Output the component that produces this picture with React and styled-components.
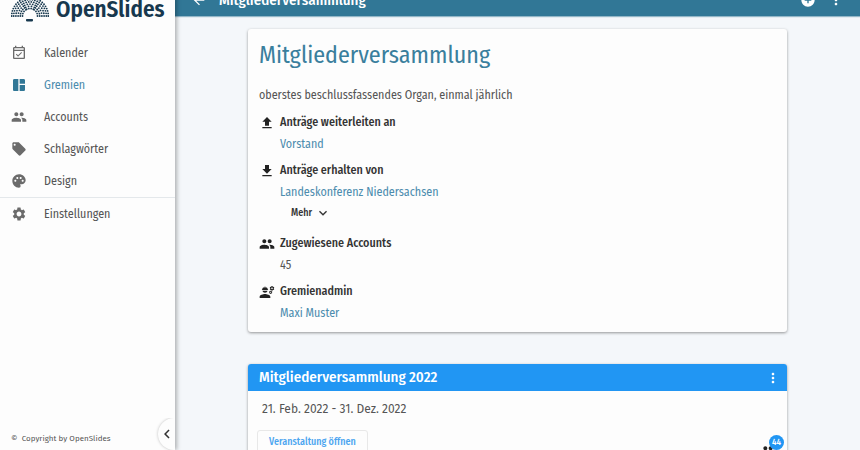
import styled, { createGlobalStyle } from "styled-components";
import {
	MdAddCircle,
	MdArrowBack,
	MdChevronLeft,
	MdDownload,
	MdEngineering,
	MdExpandMore,
	MdGroup,
	MdLocalOffer,
	MdMoreVert,
	MdOutlineEventAvailable,
	MdPalette,
	MdSettings,
	MdUpload,
} from "react-icons/md";

const GlobalStyle = createGlobalStyle`
	* {
		box-sizing: border-box;
	}

	body {
		margin: 0;
		overflow: hidden;
		background: #f4f7fa;
		color: #555;
		font-family: "Fira Sans Condensed", Roboto, sans-serif;
		font-size: 12px;
		line-height: 21px;
	}

	button {
		padding: 0;
		border: 0;
		background: none;
		color: inherit;
		font: inherit;
		cursor: pointer;
	}

	svg {
		display: block;
		flex: none;
	}
`;

/* the top of the page is scrolled out by half a toolbar */
const Shell = styled.div`
	display: grid;
	grid-template-rows: minmax(0, 1fr);
	grid-template-columns: 175px minmax(0, 1fr);
	height: calc(100vh + 16px);
	margin-top: -16px;
`;

const Sidebar = styled.aside`
	position: relative;
	z-index: 1;
	display: flex;
	flex-direction: column;
	background: #fdfdfd;
	box-shadow: 2px 0 4px rgba(0, 0, 0, 0.28);
`;

const Brand = styled.a`
	display: flex;
	align-items: center;
	gap: 7px;
	height: 50px;
	padding-left: 11px;
	color: #17384e;
	font-size: 23px;
	font-weight: 600;
	text-decoration: none;
`;

const Nav = styled.nav`
	display: flex;
	flex-direction: column;
	padding-top: 3px;
`;

const NavLink = styled.a`
	display: flex;
	align-items: center;
	gap: 17px;
	height: 32px;
	padding-left: 11px;
	color: ${({ $active }) => ($active ? "#4c8cae" : "#555")};
	text-decoration: none;

	svg {
		color: ${({ $active }) => ($active ? "#317796" : "#6b6b6b")};
	}
`;

const Divider = styled.hr`
	width: 100%;
	height: 1px;
	margin: 0;
	border: 0;
	background: #e4e8eb;
`;

const SidebarFooter = styled.div`
	display: flex;
	align-items: flex-end;
	justify-content: space-between;
	margin-top: auto;
	padding-left: 11px;
	overflow: hidden;
`;

const Copyright = styled.small`
	padding-bottom: 1px;
	font-family: "Fira Sans", Roboto, sans-serif;
	font-size: 8px;
`;

const CollapseButton = styled.button`
	display: flex;
	align-items: center;
	width: 17px;
	height: 32px;
	border-radius: 16px 0 0 16px;
	background: #fdfdfd;
	box-shadow: 0 0 3px rgba(0, 0, 0, 0.25);
	color: #333;
`;

const Page = styled.div`
	display: flex;
	flex-direction: column;
	min-width: 0;
`;

const Toolbar = styled.header`
	display: flex;
	flex: none;
	align-items: center;
	gap: 12px;
	height: 32px;
	padding: 0 16px;
	background: #317796;
	color: #fff;
	box-shadow: 0 1px 1px rgba(49, 119, 150, 0.5);
`;

const ToolbarTitle = styled.span`
	flex: 1;
	font-size: 15px;
	font-weight: 500;
`;

const Content = styled.main`
	display: flex;
	flex-direction: column;
	gap: 32px;
	padding: 13px 73px 0;
`;

const Card = styled.section`
	border-radius: 3px;
	background: #fdfdfd;
	box-shadow: 0 1px 3px rgba(0, 0, 0, 0.4);
`;

const CommitteeCard = styled(Card)`
	padding: 8px 11px 3px;
`;

const Title = styled.h1`
	margin: 0;
	color: #3a7f9d;
	font-size: 24px;
	font-weight: 400;
	line-height: 36px;
`;

const Description = styled.p`
	margin: 12px 0 6px;
`;

const Group = styled.div`
	margin-bottom: 5px;
`;

const GroupTitle = styled.h2`
	display: flex;
	align-items: center;
	gap: 5px;
	margin: 0;
	color: #333;
	font-size: 12px;
	font-weight: 500;

	svg {
		color: #222;
	}
`;

const GroupValue = styled.div`
	padding-left: 21px;
	line-height: 22px;
`;

const TextLink = styled.a`
	color: #4c8cae;
	text-decoration: none;
`;

const MoreButton = styled.button`
	display: flex;
	align-items: center;
	gap: 3px;
	height: 20px;
	margin: 0 0 10px 32px;
	color: #333;
	font-size: 10px;
	font-weight: 500;
`;

const MeetingHeader = styled.header`
	display: flex;
	align-items: center;
	justify-content: space-between;
	height: 27px;
	padding: 0 6px 0 11px;
	border-radius: 3px 3px 0 0;
	background: #2196f3;
	color: #fff;
`;

const MeetingTitle = styled.h2`
	margin: 0;
	font-size: 15px;
	font-weight: 500;
`;

const MeetingDate = styled.p`
	margin: 0;
	padding: 8px 14px 0;
	font-family: "Fira Sans", Roboto, sans-serif;
`;

const MeetingActions = styled.div`
	display: flex;
	align-items: flex-start;
	justify-content: space-between;
	padding: 10px 5px 10px 9px;
`;

const OpenButton = styled.button`
	height: 24px;
	padding: 0 11px;
	border: 1px solid #e8e8e8;
	border-radius: 3px;
	color: #4ba5f0;
	font-size: 10px;
	font-weight: 500;
`;

const Participants = styled.div`
	position: relative;
	padding: 13px 6px 0 0;
	color: #222;
`;

const Badge = styled.span`
	position: absolute;
	top: 5px;
	right: -2px;
	width: 15px;
	height: 15px;
	border-radius: 50%;
	background: #2196f3;
	color: #fff;
	font-size: 9px;
	font-weight: 500;
	line-height: 15px;
	text-align: center;
`;

/* seats of the plenum: three blocks with an aisle between them */
const blocks = [
	[0, 56],
	[64, 116],
	[124, 180],
];
const radii = [7.5, 9.7, 11.9, 14.1, 16.3, 18.3];

const seats = radii.flatMap((radius) =>
	blocks.flatMap(([from, to]) => {
		const steps = Math.round(((to - from) * Math.PI * radius) / 180 / 2.6);
		return Array.from({ length: steps + 1 }, (_, i) => {
			const angle = ((from + ((to - from) * i) / steps) * Math.PI) / 180;
			return [19 - radius * Math.cos(angle), 20 - radius * Math.sin(angle)];
		});
	})
);

const Logo = () => (
	<svg width="38" height="26" viewBox="0 0 38 26" fill="currentColor" aria-hidden="true">
		{seats.map(([cx, cy], index) => (
			<circle key={index} cx={cx} cy={cy} r="0.9" />
		))}
		<rect x="15" y="23" width="7" height="2.4" rx="0.8" />
	</svg>
);

const BoardIcon = ({ size }) => (
	<svg width={size} height={size} viewBox="0 0 24 24" fill="currentColor">
		<path d="M11 21H5c-1.1 0-2-.9-2-2V5c0-1.1.9-2 2-2h6v18zM13 21h6c1.1 0 2-.9 2-2v-7h-8v9zM21 10V5c0-1.1-.9-2-2-2h-6v7h8z" />
	</svg>
);

const mainLinks = [
	{ text: "Kalender", icon: MdOutlineEventAvailable },
	{ text: "Gremien", icon: BoardIcon, active: true },
	{ text: "Accounts", icon: MdGroup },
	{ text: "Schlagwörter", icon: MdLocalOffer },
	{ text: "Design", icon: MdPalette },
];

const InfoGroup = ({ icon: Icon, title, children }) => (
	<Group>
		<GroupTitle>
			<Icon size={16} />
			{title}
		</GroupTitle>
		{children}
	</Group>
);

const App = () => {
	return (
		<>
			<GlobalStyle />
			<Shell>
				<Sidebar>
					<Brand href="#">
						<Logo />
						OpenSlides
					</Brand>
					<Nav>
						{mainLinks.map(({ text, icon: Icon, active }) => (
							<NavLink key={text} href="#" $active={active}>
								<Icon size={16} />
								{text}
							</NavLink>
						))}
						<Divider />
						<NavLink href="#">
							<MdSettings size={16} />
							Einstellungen
						</NavLink>
					</Nav>
					<SidebarFooter>
						<Copyright>©&nbsp; Copyright by OpenSlides</Copyright>
						<CollapseButton aria-label="Menü einklappen">
							<MdChevronLeft size={18} />
						</CollapseButton>
					</SidebarFooter>
				</Sidebar>
				<Page>
					<Toolbar>
						<button aria-label="Zurück">
							<MdArrowBack size={16} />
						</button>
						<ToolbarTitle>Mitgliederversammlung</ToolbarTitle>
						<button aria-label="Neue Veranstaltung">
							<MdAddCircle size={16} />
						</button>
						<button aria-label="Weitere Aktionen">
							<MdMoreVert size={16} />
						</button>
					</Toolbar>
					<Content>
						<CommitteeCard>
							<Title>Mitgliederversammlung</Title>
							<Description>oberstes beschlussfassendes Organ, einmal jährlich</Description>
							<InfoGroup icon={MdUpload} title="Anträge weiterleiten an">
								<GroupValue>
									<TextLink href="#">Vorstand</TextLink>
								</GroupValue>
							</InfoGroup>
							<InfoGroup icon={MdDownload} title="Anträge erhalten von">
								<GroupValue>
									<TextLink href="#">Landeskonferenz Niedersachsen</TextLink>
								</GroupValue>
								<MoreButton>
									Mehr
									<MdExpandMore size={16} />
								</MoreButton>
							</InfoGroup>
							<InfoGroup icon={MdGroup} title="Zugewiesene Accounts">
								<GroupValue>45</GroupValue>
							</InfoGroup>
							<InfoGroup icon={MdEngineering} title="Gremienadmin">
								<GroupValue>
									<TextLink href="#">Maxi Muster</TextLink>
								</GroupValue>
							</InfoGroup>
						</CommitteeCard>
						<Card>
							<MeetingHeader>
								<MeetingTitle>Mitgliederversammlung 2022</MeetingTitle>
								<button aria-label="Optionen">
									<MdMoreVert size={16} />
								</button>
							</MeetingHeader>
							<MeetingDate>21. Feb. 2022 - 31. Dez. 2022</MeetingDate>
							<MeetingActions>
								<OpenButton>Veranstaltung öffnen</OpenButton>
								<Participants>
									<MdGroup size={16} />
									<Badge>44</Badge>
								</Participants>
							</MeetingActions>
						</Card>
					</Content>
				</Page>
			</Shell>
		</>
	);
};

export default App;
